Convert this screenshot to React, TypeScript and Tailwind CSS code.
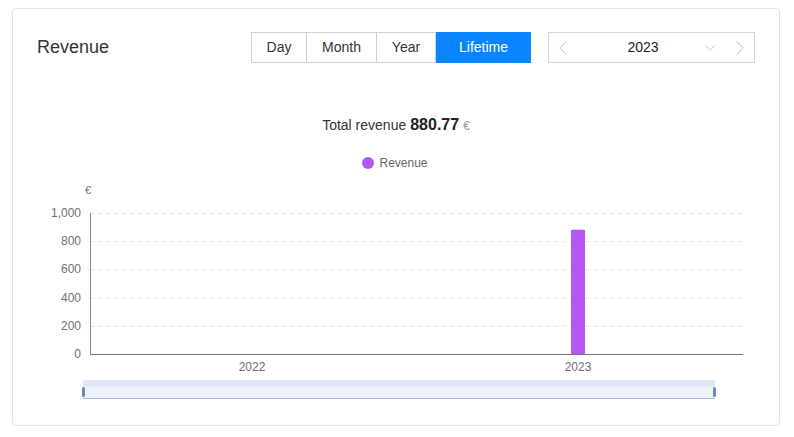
import { ChevronLeft, ChevronRight, ChevronDown } from 'lucide-react'

const periods = [
  { label: 'Day', w: 'w-[56px]' },
  { label: 'Month', w: 'w-[70px]' },
  { label: 'Year', w: 'w-[59px]' },
  { label: 'Lifetime', w: 'w-[95px]' },
]

const yTicks = [1000, 800, 600, 400, 200, 0]

function RevenueChart() {
  // coordinates here are page pixels (viewBox is offset to the svg's place on the page)
  const top = 213
  const bottom = 354
  const left = 90
  const right = 743
  const y = (v: number) => bottom - (v / 1000) * (bottom - top)
  const value = 880.77

  return (
    <svg width="766" height="230" viewBox="13 180 766 230" className="block mt-[8px]">
      <text x="88" y="194" fontSize="11" fill="#6e7079" textAnchor="middle">€</text>
      {yTicks.map((t) => (
        <g key={t}>
          {t !== 0 && (
            <line x1={left} x2={right} y1={y(t) + 0.5} y2={y(t) + 0.5} stroke="#e0e6f1" strokeDasharray="5 3" />
          )}
          <text x="81" y={y(t) + 4} fontSize="12" fill="#6e7079" textAnchor="end">
            {t.toLocaleString('en-US')}
          </text>
        </g>
      ))}
      <line x1={left + 0.5} x2={left + 0.5} y1={top} y2={bottom} stroke="#8a8d96" />
      <line x1={left} x2={right} y1={bottom + 0.5} y2={bottom + 0.5} stroke="#6e7079" />
      <rect x="571" y={y(value)} width="14" height={bottom - y(value)} rx="1" fill="#b357f6" />
      <text x="252" y="371" fontSize="12" fill="#6e7079" textAnchor="middle">2022</text>
      <text x="578" y="371" fontSize="12" fill="#6e7079" textAnchor="middle">2023</text>

      {/* zoom slider */}
      <rect x="83" y="380" width="632" height="19" fill="#eef2fb" />
      <rect x="83" y="380" width="632" height="6" fill="#e0e6f5" />
      <line x1="83" x2="715" y1="398.5" y2="398.5" stroke="#aab5dd" />
      <line x1="83" x2="715" y1="386.5" y2="386.5" stroke="#e8ecf7" />
      <rect x="82" y="387" width="3" height="10" rx="1.5" fill="#7184c8" />
      <rect x="713" y="387" width="3" height="10" rx="1.5" fill="#7184c8" />
      <g stroke="#d7dcec">
        <line x1="396.5" x2="396.5" y1="381" y2="385" />
        <line x1="398.5" x2="398.5" y1="381" y2="385" />
        <line x1="400.5" x2="400.5" y1="381" y2="385" />
      </g>
    </svg>
  )
}

export default function App() {
  return (
    <div className="min-h-[437px] bg-white pl-[12px] pt-[8px] font-['Liberation_Sans',Arial,sans-serif]">
      <div className="w-[768px] h-[418px] rounded-[4px] border border-[#e3e3e3] bg-white">
        <div className="flex items-center justify-between px-[24px] pt-[23px]">
          <h2 className="text-[18px] text-[#333] leading-none -mt-[2px]">Revenue</h2>
          <div className="flex gap-[17px]">
            <div className="flex h-[31px]">
              {periods.map((p, i) => {
                const active = p.label === 'Lifetime'
                return (
                  <button
                    key={p.label}
                    className={
                      active
                        ? `${p.w} h-full bg-[#0a84ff] text-white text-[14px]`
                        : `${p.w} h-full border border-[#d0d0d0] ${i > 0 ? 'border-l-0' : ''} bg-white text-[#333] text-[14px]`
                    }
                  >
                    {p.label}
                  </button>
                )
              })}
            </div>
            <div className="flex h-[31px] w-[207px] items-center border border-[#d6d6d6] bg-white">
              <span className="flex w-[27px] shrink-0 justify-center text-[#bdbdbd]">
                <ChevronLeft size={26} strokeWidth={0.9} className="shrink-0" />
              </span>
              <span className="ml-[4px] w-[126px] shrink-0 text-center text-[14px] text-[#222]">2023</span>
              <span className="flex w-[8px] shrink-0 justify-center text-[#bdbdbd]">
                <ChevronDown size={18} strokeWidth={1.1} className="shrink-0" />
              </span>
              <span className="flex-1" />
              <span className="flex w-[28px] shrink-0 justify-center text-[#bdbdbd]">
                <ChevronRight size={26} strokeWidth={0.9} className="shrink-0" />
              </span>
            </div>
          </div>
        </div>

        <div className="mt-[53px] flex h-[18px] items-baseline justify-center gap-[4px] leading-[18px] text-[#333]">
          <span className="text-[14px]">Total revenue</span>
          <span className="text-[16px] font-bold text-[#222]">880.77</span>
          <span className="text-[12px] text-[#999]">€</span>
        </div>

        <div className="mt-[20px] flex h-[18px] items-center justify-center gap-[5px] pr-[2px] leading-[18px]">
          <span className="h-[12px] w-[12px] rounded-full bg-[#b357f6]" />
          <span className="text-[12px] text-[#666]">Revenue</span>
        </div>

        <RevenueChart />
      </div>
    </div>
  )
}
